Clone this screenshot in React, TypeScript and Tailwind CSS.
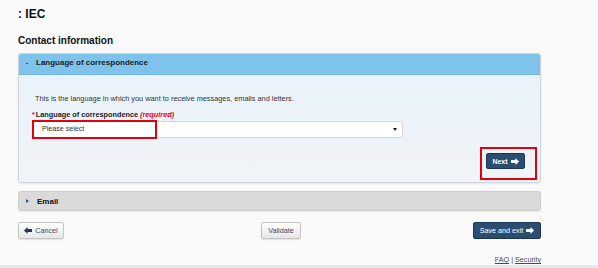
import React from "react";

const ArrowRight = ({ className = "" }: { className?: string }) => (
  <svg width="8" height="7" viewBox="0 0 8 7" className={className}>
    <path d="M8 3.5 L4.5 0 L4.5 2 L0 2 L0 5 L4.5 5 L4.5 7 Z" fill="currentColor" />
  </svg>
);

const ArrowLeft = ({ className = "" }: { className?: string }) => (
  <svg width="8" height="7" viewBox="0 0 8 7" className={className}>
    <path d="M0 3.5 L3.5 0 L3.5 2 L8 2 L8 5 L3.5 5 L3.5 7 Z" fill="currentColor" />
  </svg>
);

export default function App() {
  return (
    <div
      className="w-[598px] h-[268px] bg-[#fafafa] flex flex-col overflow-hidden"
      style={{ fontFamily: '"Liberation Sans", Arial, sans-serif' }}
    >
      <div className="ml-[18px] w-[523px] flex flex-col">
        <div className="pt-[7px] text-[12px] leading-[14px] font-bold text-[#111]">: IEC</div>
        <div className="mt-[13.5px] text-[10px] leading-[12px] font-bold text-[#111]">Contact information</div>

        {/* Language panel */}
        <div className="mt-[6.5px] rounded-[3px] border border-[#cdd5dc] shadow-[0_1px_2px_rgba(0,0,0,0.08)] overflow-hidden">
          <div className="h-[21px] bg-[#7ec3ec] border-b border-[#73b4dc] flex items-start pt-[4px] pl-[6px]">
            <span className="w-[2px] h-[1px] bg-[#1d5a8c] mt-[5px] ml-[1px]" />
            <span className="ml-[8px] text-[8px] leading-[10px] font-bold text-[#1b1b1b]">Language of correspondence</span>
          </div>
          <div className="bg-gradient-to-b from-[#e9f2fb] to-[#f1f4f7] pt-[19px] pb-[13px] pr-[15px] flex flex-col">
            <div className="pl-[16px] text-[7.35px] leading-[9px] text-[#333]">
              This is the language in which you want to receive messages, emails and letters.
            </div>
            <div className="pl-[13px] mt-[7px] text-[7.3px] leading-[9px] font-bold text-[#222]">
              <span className="text-[#e0001a]">*</span>
              <span className="ml-[1px]">Language of correspondence </span>
              <span className="italic text-[#e0001a]">(required)</span>
            </div>
            <div className="relative ml-[14px] mt-[2px] w-[370px] h-[17px] bg-white border border-[#d6d6d6] rounded-[3px] flex items-center pl-[8px] pr-[4px]">
              <span className="flex-1 text-[7.1px] leading-[9px] text-[#333]">Please select</span>
              <svg width="4" height="3" viewBox="0 0 4 3" className="mr-[1px]">
                <path d="M0 0 L4 0 L2 3 Z" fill="#111" />
              </svg>
              <div className="absolute left-[-2px] top-[-2px] w-[125px] h-[19px] border-2 border-[#e3000f]" />
            </div>
            <div className="mt-[15px] flex justify-end">
              <div className="relative">
                <button className="h-[16px] w-[39px] bg-[#2a4d71] border border-[#1c3756] rounded-[2px] flex items-center justify-center gap-[3px] text-white text-[7px] font-bold leading-[9px]">
                  <span>Next</span>
                  <ArrowRight />
                </button>
                <div className="absolute left-[-6px] top-[-6px] w-[57px] h-[33px] border-[2.5px] border-[#e3000f]" />
              </div>
            </div>
          </div>
        </div>

        {/* Email panel */}
        <div className="mt-[8px] h-[20px] rounded-[3px] bg-[#dadada] border border-[#cfcfcf] shadow-[0_1px_1px_rgba(0,0,0,0.06)] flex items-center pl-[6px]">
          <svg width="3" height="4" viewBox="0 0 3 4" className="ml-[1px]">
            <path d="M0 0 L3 2 L0 4 Z" fill="#1d5a8c" />
          </svg>
          <span className="ml-[8px] text-[8px] leading-[10px] font-bold text-[#111] mt-[1px]">Email</span>
        </div>

        {/* Buttons */}
        <div className="mt-[11px] grid grid-cols-[1fr_auto_1fr] items-center">
          <button className="justify-self-start h-[17px] w-[46px] bg-gradient-to-b from-[#ffffff] to-[#e6e6e6] border border-[#c4c4c4] rounded-[2px] shadow-[0_1px_1px_rgba(0,0,0,0.1)] flex items-center justify-center gap-[3px] text-[#2e4c6e] text-[7.2px] leading-[9px]">
            <ArrowLeft className="text-[#1e3a5a]" />
            <span>Cancel</span>
          </button>
          <button className="ml-[3px] h-[17px] w-[40px] bg-gradient-to-b from-[#ffffff] to-[#e6e6e6] border border-[#c4c4c4] rounded-[2px] shadow-[0_1px_1px_rgba(0,0,0,0.1)] flex items-center justify-center text-[#2e4c6e] text-[7.2px] leading-[9px]">
            Validate
          </button>
          <button className="justify-self-end h-[17px] w-[68px] bg-[#2a4d71] border border-[#1c3756] rounded-[2px] flex items-center justify-center gap-[3px] text-white text-[7.2px] leading-[9px]">
            <span>Save and exit</span>
            <ArrowRight />
          </button>
        </div>

        <div className="mt-[16px] flex justify-end text-[7.2px] leading-[9px] text-[#3d4f63]">
          <span className="underline">FAQ</span>
          <span className="mx-[2px]">|</span>
          <span className="underline">Security</span>
        </div>
      </div>
      <div className="mt-[1px] h-[3px] w-full bg-[#e4e8ec]" />
    </div>
  );
}
